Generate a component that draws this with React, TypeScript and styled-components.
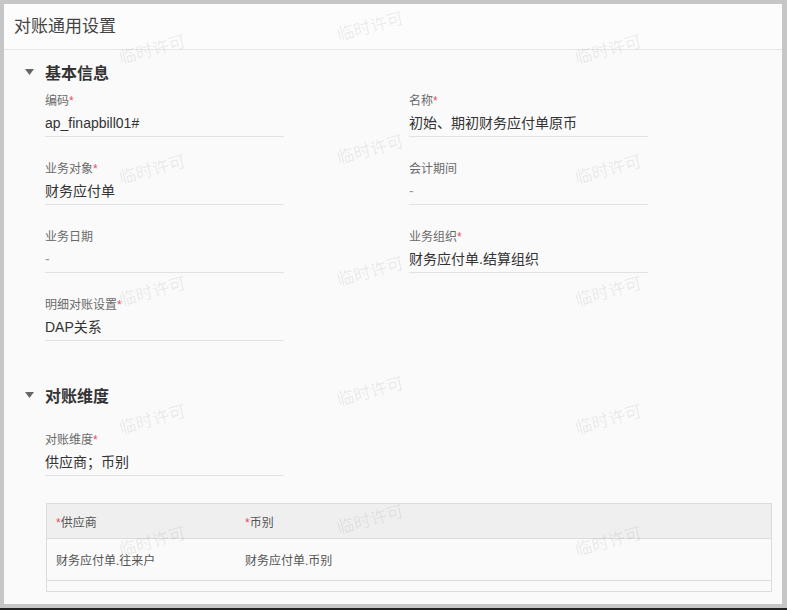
import React from 'react'
import styled, { createGlobalStyle } from 'styled-components'

const Global = createGlobalStyle`
  html, body { margin: 0; padding: 0; }
  body {
    background: #c6c6c6;
    font-family: "Liberation Sans", "Noto Sans CJK SC", sans-serif;
  }
  * { box-sizing: border-box; }
`

const Frame = styled.div`
  width: 787px;
  height: 610px;
  padding: 4px 5px 4px 4px;
  background: #c6c6c6;
  border-bottom: 2px solid #222;
`

const Card = styled.div`
  position: relative;
  height: 600px;
  background: #fafafa;
  overflow: hidden;
`

const Header = styled.div`
  height: 46px;
  display: flex;
  align-items: center;
  padding: 0 0 4px 10px;
  font-size: 17px;
  color: #444;
  background: #fcfcfc;
  border-bottom: 1px solid #e6e6e6;
`

const SectionTitle = styled.div<{ $top: number }>`
  display: flex;
  align-items: center;
  height: 20px;
  margin-top: ${p => p.$top}px;
  padding-left: 21px;
  font-size: 16px;
  font-weight: bold;
  color: #333;
  svg { margin-right: 11px; }
`

const Grid = styled.div<{ $top: number }>`
  display: grid;
  grid-template-columns: 364px 364px;
  row-gap: 24px;
  margin-top: ${p => p.$top}px;
  padding-left: 41px;
`

const Field = styled.div`
  width: 239px;
  height: 44px;
  border-bottom: 1px solid #e2e2e2;
`

const Label = styled.div`
  font-size: 12px;
  line-height: 16px;
  color: #6a6a6a;
`

const Star = styled.span`
  color: #e6505a;
`

const Value = styled.div<{ $empty?: boolean }>`
  margin-top: 3px;
  font-size: 14px;
  line-height: 22px;
  color: ${p => (p.$empty ? '#999' : '#333')};
`

const Table = styled.div`
  margin: 27px 10px 0 42px;
  border: 1px solid #dcdcdc;
  font-size: 12px;
`

const Row = styled.div<{ $head?: boolean; $h: number }>`
  display: grid;
  grid-template-columns: 189px 1fr;
  align-items: center;
  height: ${p => p.$h}px;
  background: ${p => (p.$head ? '#efefef' : 'transparent')};
  color: #555;
  border-bottom: 1px solid #dcdcdc;
  &:last-child { border-bottom: none; }
`

const Cell = styled.div`
  padding-left: 9px;
`

const Mark = styled.span`
  position: absolute;
  font-size: 17px;
  color: rgba(0, 0, 0, 0.085);
  white-space: nowrap;
  transform: translate(-50%, -50%) rotate(-15deg);
  pointer-events: none;
`

const Caret = () => (
  <svg width="9" height="6" viewBox="0 0 9 6">
    <path d="M0 0 H9 L4.5 6 Z" fill="#666" />
  </svg>
)

type F = { label: string; value: string; req?: boolean }

const basic: F[] = [
  { label: '编码', value: 'ap_finapbill01#', req: true },
  { label: '名称', value: '初始、期初财务应付单原币', req: true },
  { label: '业务对象', value: '财务应付单', req: true },
  { label: '会计期间', value: '-' },
  { label: '业务日期', value: '-' },
  { label: '业务组织', value: '财务应付单.结算组织', req: true },
  { label: '明细对账设置', value: 'DAP关系', req: true },
]

const marks: [number, number][] = []
;[148, 604].forEach(x => [44, 164, 286, 414, 536].forEach(y => marks.push([x, y])))
;[366].forEach(x => [21, 144, 266, 386, 514].forEach(y => marks.push([x, y])))

function FieldBox({ f }: { f: F }) {
  return (
    <Field>
      <Label>
        {f.label}
        {f.req && <Star>*</Star>}
      </Label>
      <Value $empty={f.value === '-'}>{f.value}</Value>
    </Field>
  )
}

export default function App() {
  return (
    <>
      <Global />
      <Frame>
        <Card>
          <Header>对账通用设置</Header>
          <SectionTitle $top={12}>
            <Caret />
            基本信息
          </SectionTitle>
          <Grid $top={11}>
            {basic.map(f => (
              <FieldBox key={f.label} f={f} />
            ))}
          </Grid>
          <SectionTitle $top={44}>
            <Caret />
            对账维度
          </SectionTitle>
          <Grid $top={27}>
            <FieldBox f={{ label: '对账维度', value: '供应商；币别', req: true }} />
          </Grid>
          <Table>
            <Row $head $h={35}>
              <Cell>
                <Star>*</Star>供应商
              </Cell>
              <Cell>
                <Star>*</Star>币别
              </Cell>
            </Row>
            <Row $h={42}>
              <Cell>财务应付单.往来户</Cell>
              <Cell>财务应付单.币别</Cell>
            </Row>
            <Row $h={10}>
              <Cell />
              <Cell />
            </Row>
          </Table>
          {marks.map(([x, y], i) => (
            <Mark key={i} style={{ left: x, top: y }}>
              临时许可
            </Mark>
          ))}
        </Card>
      </Frame>
    </>
  )
}
